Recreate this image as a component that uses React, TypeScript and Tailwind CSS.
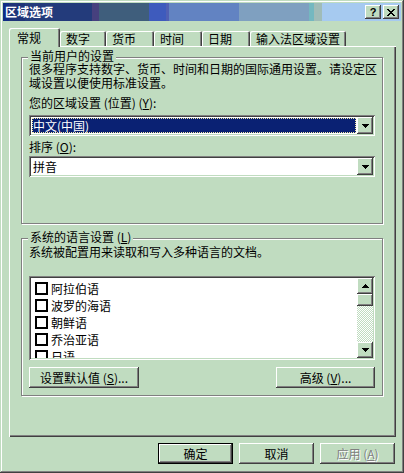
import type { ReactNode } from 'react'

const raised =
  'shadow-[inset_-1px_-1px_#404040,inset_1px_1px_#ffffff,inset_-2px_-2px_#808080,inset_2px_2px_#c0dcc0]'
const sunken =
  'shadow-[inset_1px_1px_#808080,inset_-1px_-1px_#ffffff,inset_2px_2px_#404040,inset_-2px_-2px_#c0dcc0]'

function Key({ children }: { children: ReactNode }) {
  return <span className="underline underline-offset-[1px]">{children}</span>
}

function Arrow({ up }: { up?: boolean }) {
  return (
    <svg width="7" height="4" viewBox="0 0 7 4" shapeRendering="crispEdges" className={up ? 'rotate-180' : ''}>
      <path d="M0 0h7v1H0zM1 1h5v1H1zM2 2h3v1H2zM3 3h1v1H3z" fill="#000" />
    </svg>
  )
}

function TitleBar() {
  return (
    <div className="h-[18px] flex items-center justify-between pl-[2px] pr-[2px] bg-[linear-gradient(90deg,#102c84_0px,#102c84_6px,#1e3478_6px,#1e3478_22px,#233b7b_22px,#233b7b_89px,#46407e_89px,#46407e_96px,#3f5e7c_96px,#3f5e7c_146px,#3e5bbd_146px,#3e5bbd_163px,#5060b4_163px,#5060b4_166px,#6283c2_166px,#6283c2_236px,#7fa0c0_236px,#7fa0c0_306px,#74b8c0_306px,#74b8c0_311px,#a0bcb8_311px,#a0bcb8_319px,#a6caf0_319px)]">
      <span className="text-white font-bold text-[12px] leading-[14px]">区域选项</span>
      <div className="flex gap-[2px]">
        <div className={`w-[16px] h-[14px] bg-[#c0dcc0] flex items-center justify-center ${raised}`}>
          <span className="font-['Liberation_Sans',sans-serif] font-bold text-[11px] leading-[11px] text-black">?</span>
        </div>
        <div className={`w-[16px] h-[14px] bg-[#c0dcc0] flex items-center justify-center ${raised}`}>
          <svg width="8" height="7" viewBox="0 0 8 7" shapeRendering="crispEdges">
            <path
              d="M0 0h2v1H0zM6 0h2v1H6zM1 1h2v1H1zM5 1h2v1H5zM2 2h4v1H2zM3 3h2v1H3zM2 4h4v1H2zM1 5h2v1H1zM5 5h2v1H5zM0 6h2v1H0zM6 6h2v1H6z"
              fill="#000"
            />
          </svg>
        </div>
      </div>
    </div>
  )
}

const tabs = [
  { label: '数字', w: 'w-[46px]' },
  { label: '货币', w: 'w-[48px]' },
  { label: '时间', w: 'w-[48px]' },
  { label: '日期', w: 'w-[48px]' },
  { label: '输入法区域设置', w: 'w-[96px]' },
]

function Tabs() {
  return (
    <div className="h-[18px] flex items-end">
      <div className="relative z-10 w-[51px] h-[19px] -mb-px pl-[8px] pt-[3px] bg-[#c0dcc0] rounded-t-[2px] shadow-[inset_1px_1px_#ffffff,inset_-1px_0_#404040,inset_-2px_0_#808080]">
        常规
      </div>
      {tabs.map((t) => (
        <div
          key={t.label}
          className={`${t.w} h-[15px] pl-[6px] pt-[1px] rounded-t-[2px] shadow-[inset_1px_1px_#ffffff,inset_-1px_0_#404040,inset_-2px_0_#808080]`}
        >
          {t.label}
        </div>
      ))}
    </div>
  )
}

function Group({ label, className, children }: { label: ReactNode; className: string; children: ReactNode }) {
  return (
    <div className={`relative w-[362px] border border-[#808080] shadow-[inset_1px_1px_#ffffff,1px_1px_#ffffff] px-[7px] ${className}`}>
      <span className="absolute -top-[8px] left-[6px] px-[2px] bg-[#c0dcc0] leading-[12px]">{label}</span>
      {children}
    </div>
  )
}

function Combo({ value, focused, className }: { value: string; focused?: boolean; className: string }) {
  return (
    <div className={`h-[21px] flex p-[2px] bg-white ${sunken} ${className}`}>
      <div className="flex-1 flex p-[1px]">
        <div
          className={`flex-1 flex items-center border ${
            focused ? 'bg-[#0a2173] text-white border-dotted border-[#f2eaa6]' : 'border-transparent'
          }`}
        >
          {value}
        </div>
      </div>
      <div className={`w-[16px] bg-[#c0dcc0] flex items-center justify-center ${raised}`}>
        <Arrow />
      </div>
    </div>
  )
}

function Scrollbar() {
  return (
    <div className="w-[16px] flex flex-col">
      <div className={`h-[16px] bg-[#c0dcc0] flex items-center justify-center ${raised}`}>
        <Arrow up />
      </div>
      <div className={`h-[12px] bg-[#c0dcc0] ${raised}`} />
      <div className="flex-1 bg-[image:repeating-conic-gradient(#ffffff_0%_25%,#c0dcc0_0%_50%)] bg-[length:2px_2px]" />
      <div className={`h-[16px] bg-[#c0dcc0] flex items-center justify-center ${raised}`}>
        <Arrow />
      </div>
    </div>
  )
}

const languages = ['阿拉伯语', '波罗的海语', '朝鲜语', '乔治亚语', '日语']

function LangList() {
  return (
    <div className={`h-[84px] mt-[17px] bg-white p-[2px] flex ${sunken}`}>
      <div className="flex-1 overflow-hidden pt-[2px] pl-[4px]">
        {languages.map((l) => (
          <div key={l} className="h-[17px] flex items-center gap-[3px]">
            <span className="w-[13px] h-[13px] border-2 border-black bg-white shrink-0" />
            <span>{l}</span>
          </div>
        ))}
      </div>
      <Scrollbar />
    </div>
  )
}

function Button({ children, className, isDefault }: { children: ReactNode; className: string; isDefault?: boolean }) {
  return (
    <div
      className={`h-[21px] flex items-center justify-center bg-[#c0dcc0] ${raised} ${
        isDefault ? 'border border-black' : ''
      } ${className}`}
    >
      {children}
    </div>
  )
}

export default function App() {
  return (
    <div className="w-[404px] h-[473px] bg-[#c0dcc0] p-[3px] flex flex-col text-black text-[12px] leading-[14px] font-['Noto_Sans_CJK_SC',sans-serif] shadow-[inset_-1px_-1px_#404040,inset_1px_1px_#c0dcc0,inset_-2px_-2px_#808080,inset_2px_2px_#ffffff]">
      <TitleBar />
      <div className="mt-[7px] ml-[6px] mr-[5px] flex flex-col">
        <Tabs />
        <div className="h-[391px] pt-[11px] pl-[12px] shadow-[inset_1px_1px_#ffffff,inset_-1px_-1px_#404040,inset_-2px_-2px_#808080]">
          <Group label="当前用户的设置" className="h-[167px] pt-[4px]">
            <p className="whitespace-nowrap">很多程序支持数字、货币、时间和日期的国际通用设置。请设定区</p>
            <p className="whitespace-nowrap">域设置以便使用标准设置。</p>
            <p className="mt-[6px]">
              您的区域设置 (位置) (<Key>Y</Key>):
            </p>
            <Combo value="中文(中国)" focused className="mt-[5px]" />
            <p className="mt-[4px]">
              排序 (<Key>O</Key>):
            </p>
            <Combo value="拼音" className="mt-[2px]" />
          </Group>
          <Group
            label={
              <>
                系统的语言设置 (<Key>L</Key>)
              </>
            }
            className="mt-[14px] h-[158px] pt-[6px]"
          >
            <p>系统被配置用来读取和写入多种语言的文档。</p>
            <LangList />
            <div className="mt-[7px] flex justify-between">
              <Button className="w-[110px]">
                设置默认值 (<Key>S</Key>)...
              </Button>
              <Button className="w-[99px]">
                高级 (<Key>V</Key>)...
              </Button>
            </div>
          </Group>
        </div>
      </div>
      <div className="mt-[6px] mr-[6px] flex justify-end gap-[6px]">
        <Button className="w-[75px]" isDefault>
          确定
        </Button>
        <Button className="w-[75px]">取消</Button>
        <Button className="w-[75px] text-[#808080] [text-shadow:1px_1px_0_#ffffff]">
          应用 (<Key>A</Key>)
        </Button>
      </div>
    </div>
  )
}
